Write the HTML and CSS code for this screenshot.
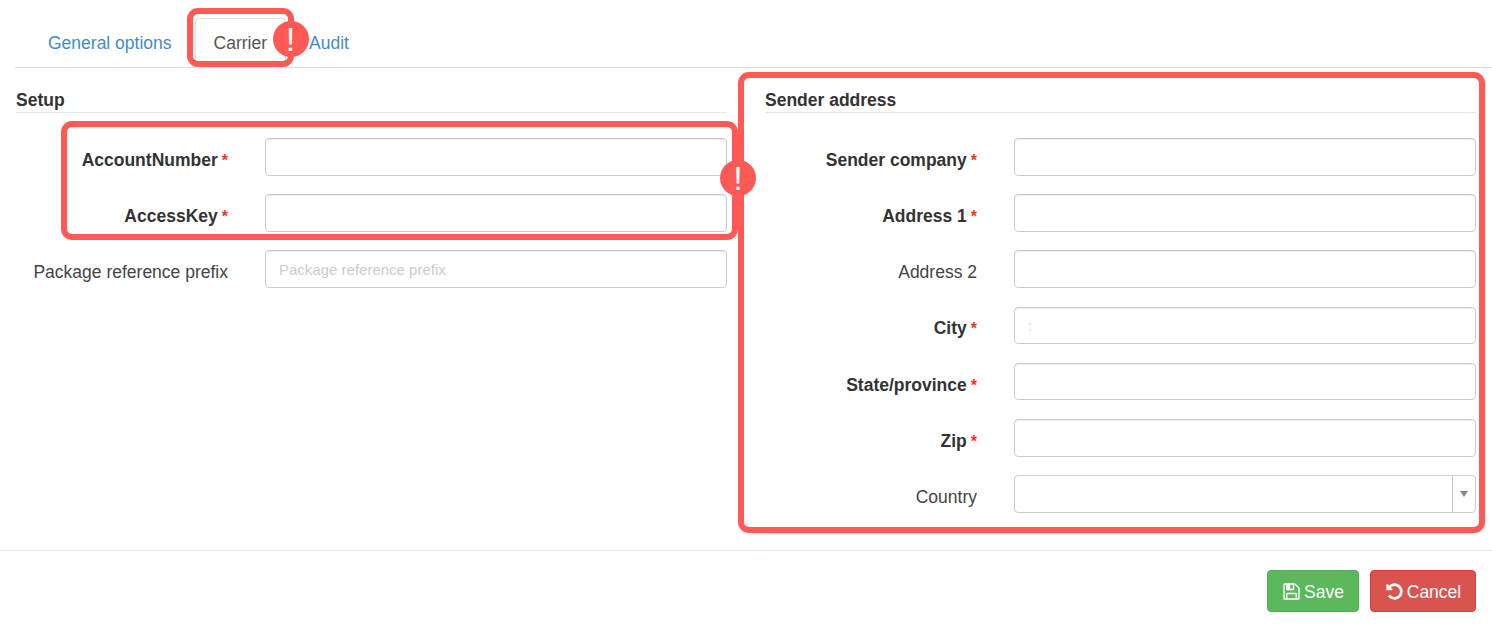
FILE: index.html
```html
<!DOCTYPE html>
<html lang="en">
<head>
  <meta charset="UTF-8">
  <title>Carrier settings</title>
  <link rel="stylesheet" href="styles.css">
</head>
<body>

  <div class="tabs-wrap">
    <ul class="tabs">
      <li class="tab"><a href="#">General options</a></li>
      <li class="tab active">
        <a href="#">Carrier</a>
        <span class="mark mark-tab"></span>
        <span class="badge badge-tab">!</span>
      </li>
      <li class="tab"><a href="#">Audit</a></li>
    </ul>
  </div>

  <div class="columns">
    <section class="col">
      <h4>Setup</h4>
      <div class="rows">
        <div class="group">
          <span class="mark mark-group"></span>
          <span class="badge badge-group">!</span>
          <div class="row">
            <label class="req">AccountNumber</label>
            <input type="text">
          </div>
          <div class="row">
            <label class="req">AccessKey</label>
            <input type="text">
          </div>
        </div>
        <div class="row">
          <label>Package reference prefix</label>
          <input type="text" placeholder="Package reference prefix">
        </div>
      </div>
    </section>

    <section class="col col-sender">
      <span class="mark mark-sender"></span>
      <h4>Sender address</h4>
      <div class="rows">
        <div class="row">
          <label class="req">Sender company</label>
          <input type="text">
        </div>
        <div class="row">
          <label class="req">Address 1</label>
          <input type="text">
        </div>
        <div class="row">
          <label>Address 2</label>
          <input type="text">
        </div>
        <div class="row">
          <label class="req">City</label>
          <input type="text" class="faint" value=":">
        </div>
        <div class="row">
          <label class="req">State/province</label>
          <input type="text">
        </div>
        <div class="row">
          <label class="req">Zip</label>
          <input type="text">
        </div>
        <div class="row">
          <label>Country</label>
          <div class="select">
            <span class="select-value"></span>
            <span class="select-arrow"></span>
          </div>
        </div>
      </div>
    </section>
  </div>

  <div class="footer">
    <button class="btn btn-save">
      <svg class="icon" viewBox="0 0 1792 1792"><path d="M512 1536h768v-384h-768v384zm896 0h128v-896q0-14-10-38.500t-20-34.500l-281-281q-10-10-34-20t-39-10v416q0 40-28 68t-68 28h-576q-40 0-68-28t-28-68v-416h-128v1280h128v-416q0-40 28-68t68-28h832q40 0 68 28t28 68v416zm-384-928v-320q0-13-9.500-22.500t-22.500-9.500h-192q-13 0-22.500 9.500t-9.500 22.500v320q0 13 9.500 22.500t22.500 9.500h192q13 0 22.500-9.500t9.500-22.500zm640 32v928q0 40-28 68t-68 28h-1344q-40 0-68-28t-28-68v-1344q0-40 28-68t68-28h928q40 0 88 20t76 48l280 280q28 28 48 76t20 88z"/></svg>
      Save
    </button>
    <button class="btn btn-cancel">
      <svg class="icon" viewBox="0 0 1792 1792"><path d="M1664 896q0 156-61 298t-164 245-245 164-298 61q-172 0-327-72.500t-264-204.500q-7-10-6.500-22.500t8.500-20.500l137-138q10-9 25-9 16 2 23 12 73 95 179 147t225 52q104 0 198.500-40.500t163.500-109.500 109.500-163.500 40.500-198.500-40.500-198.500-109.500-163.500-163.500-109.500-198.500-40.500q-98 0-188 35.500t-160 101.500l137 138q31 30 14 69-17 40-59 40h-448q-26 0-45-19t-19-45v-448q0-42 40-59 39-17 69 14l130 129q107-101 244.500-156.500t284.500-55.500q156 0 298 61t245 164 164 245 61 298z"/></svg>
      Cancel
    </button>
  </div>

</body>
</html>
```

FILE: styles.css
```css
html, body {
  margin: 0;
  padding: 0;
}

body {
  font-family: "Liberation Sans", Arial, sans-serif;
  font-size: 17.5px;
  color: #333;
  background: #fff;
  height: 626px;
  overflow: hidden;
}

/* tabs */
.tabs-wrap {
  padding: 18px 0 0 15px;
}

.tabs {
  display: flex;
  list-style: none;
  margin: 0;
  padding: 0 0 0 14px;
  height: 49px;
  border-bottom: 1px solid #ddd;
}

.tab {
  position: relative;
  margin-right: 4px;
}

.tab a {
  display: block;
  padding: 15px 18px 0;
  height: 34px;
  line-height: 18px;
  color: #428bca;
  text-decoration: none;
  border: 1px solid transparent;
  border-bottom: 0;
}

.tab.active a {
  color: #555;
  background: #fff;
  height: 35px;
  border-color: #ddd;
  border-radius: 4px 4px 0 0;
}

/* columns */
.columns {
  display: grid;
  grid-template-columns: 711px 711px;
  column-gap: 38px;
  padding: 0 16px;
}

.col {
  position: relative;
}

h4 {
  margin: 22px 0 25px;
  padding-bottom: 2px;
  height: 20px;
  line-height: 20px;
  font-size: 17.5px;
  font-weight: bold;
  color: #333;
  border-bottom: 1px solid #e5e5e5;
}

.rows,
.group {
  display: flex;
  flex-direction: column;
  gap: 18.6px;
}

.group {
  position: relative;
}

.row {
  display: flex;
  align-items: center;
  gap: 37px;
  height: 37.6px;
}

.row label {
  width: 212px;
  flex: none;
  text-align: right;
  padding-top: 7px;
  color: #444;
}

.row label.req {
  font-weight: bold;
  color: #333;
}

.row label.req::after {
  content: "*";
  margin-left: 4px;
  font-size: 16px;
  font-weight: bold;
  color: #f5341f;
}

input,
.select {
  flex: 1;
  min-width: 0;
  box-sizing: border-box;
  height: 37.6px;
  padding: 0 13px;
  font-family: inherit;
  font-size: 15px;
  color: #555;
  background: #fff;
  border: 1px solid #ccc;
  border-radius: 4px;
  box-shadow: inset 0 1px 1px rgba(0, 0, 0, 0.075);
  outline: none;
}

input::placeholder {
  color: #ccc;
  opacity: 1;
}

input.faint {
  color: #ddd;
}

.select {
  display: flex;
  padding: 0;
  box-shadow: none;
}

.select-value {
  flex: 1;
}

.select-arrow {
  width: 22px;
  border-left: 1px solid #ccc;
  display: flex;
  align-items: center;
  justify-content: center;
}

.select-arrow::after {
  content: "";
  border-top: 6px solid #888;
  border-left: 4px solid transparent;
  border-right: 4px solid transparent;
}

/* validation marks, laid over the form */
.mark {
  position: absolute;
  box-sizing: border-box;
  border: 6px solid #ff5956;
  border-radius: 11px;
  pointer-events: none;
}

.mark-tab {
  left: -8px;
  top: -10px;
  width: 107px;
  height: 59px;
}

.mark-group {
  left: 45px;
  top: -17px;
  width: 677px;
  height: 119px;
}

.mark-sender {
  left: -27px;
  top: 4px;
  width: 747px;
  height: 461px;
}

.badge {
  position: absolute;
  width: 36px;
  height: 36px;
  border-radius: 50%;
  background: #ff5956;
  color: #fff;
  font-size: 34px;
  font-weight: normal;
  line-height: 36px;
  text-align: center;
  z-index: 2;
}

.badge-tab {
  left: 78px;
  top: 3px;
}

.badge-group {
  left: 704px;
  top: 22px;
}

/* footer */
.footer {
  display: flex;
  justify-content: flex-end;
  gap: 11px;
  margin-top: 37px;
  padding: 19px 16px 0;
  border-top: 1px solid #e5e5e5;
}

.btn {
  display: flex;
  align-items: center;
  justify-content: center;
  gap: 3px;
  height: 42px;
  padding: 3px 0 0;
  font-family: inherit;
  font-size: 17.5px;
  color: #fff;
  border: 1px solid transparent;
  border-radius: 4px;
  cursor: pointer;
}

.icon {
  width: 19px;
  height: 19px;
  margin-top: -2px;
  fill: currentColor;
}

.btn-save {
  width: 92px;
  background-color: #5cb85c;
  border-color: #4cae4c;
}

.btn-cancel {
  width: 106px;
  background-color: #d9534f;
  border-color: #d43f3a;
}
```
